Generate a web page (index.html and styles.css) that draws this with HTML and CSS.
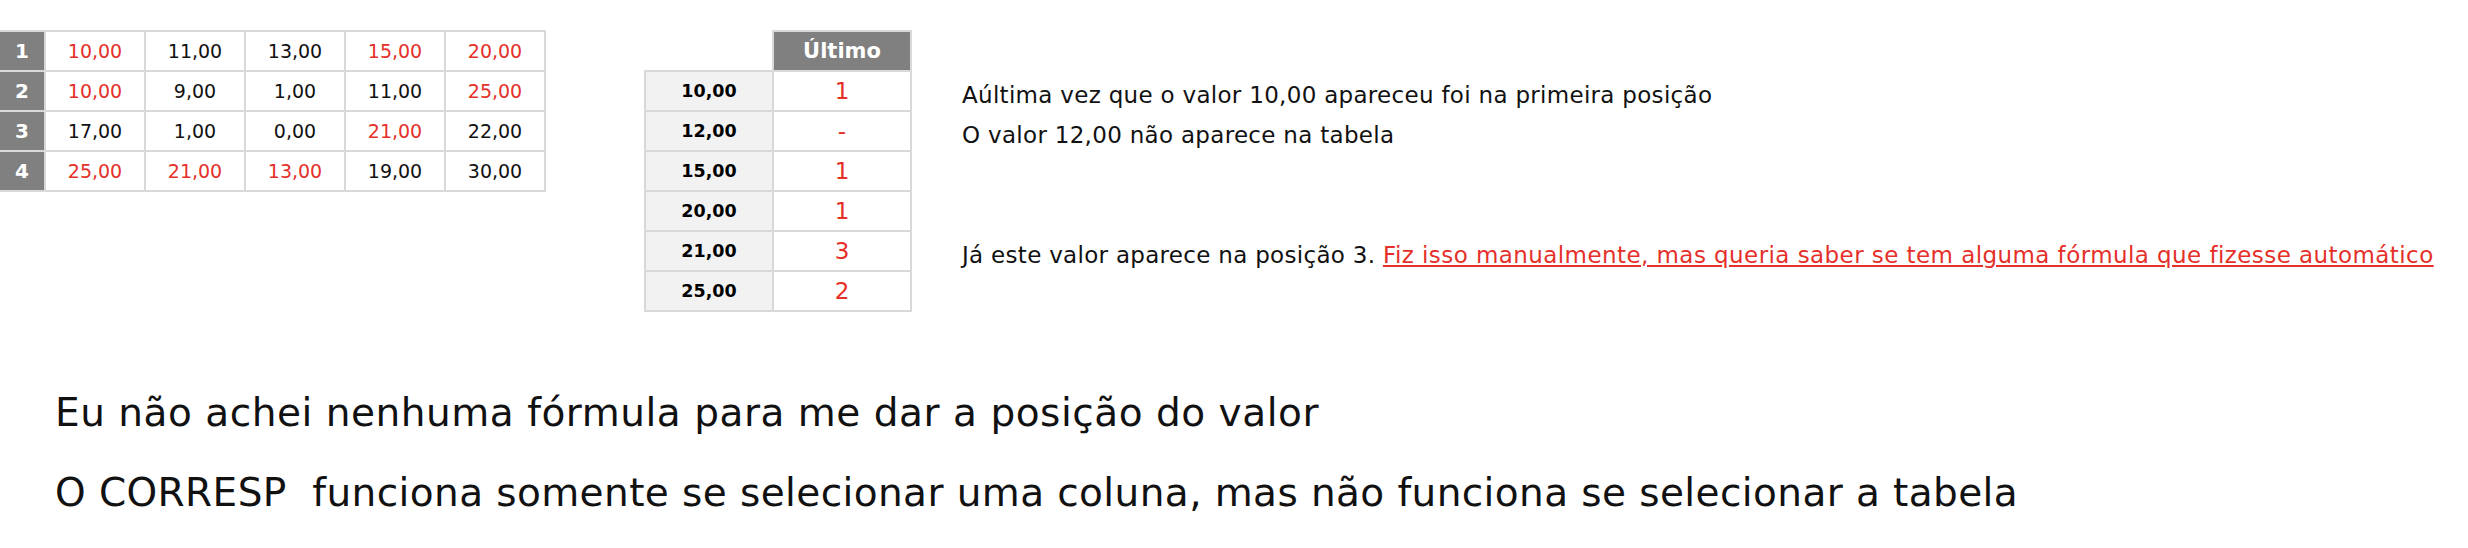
FILE: index.html
```html
<!DOCTYPE html>
<html>

<head>
	<meta charset="utf-8">
	<title>Última posição do valor</title>
	<link rel="stylesheet" href="styles.css">
</head>

<body>
	<div class="top">
		<div class="data">
			<div class="rh">1</div><div class="c red">10,00</div><div class="c">11,00</div><div class="c">13,00</div><div class="c red">15,00</div><div class="c red">20,00</div>
			<div class="rh">2</div><div class="c red">10,00</div><div class="c">9,00</div><div class="c">1,00</div><div class="c">11,00</div><div class="c red">25,00</div>
			<div class="rh">3</div><div class="c">17,00</div><div class="c">1,00</div><div class="c">0,00</div><div class="c red">21,00</div><div class="c">22,00</div>
			<div class="rh">4</div><div class="c red">25,00</div><div class="c red">21,00</div><div class="c red">13,00</div><div class="c">19,00</div><div class="c">30,00</div>
		</div>

		<div class="last">
			<div class="corner"></div><div class="head">Último</div>
			<div class="key">10,00</div><div class="val">1</div>
			<div class="key">12,00</div><div class="val">-</div>
			<div class="key">15,00</div><div class="val">1</div>
			<div class="key">20,00</div><div class="val">1</div>
			<div class="key">21,00</div><div class="val">3</div>
			<div class="key">25,00</div><div class="val">2</div>
		</div>

		<div class="notes">
			<p>Aúltima vez que o valor 10,00 apareceu foi na primeira posição</p>
			<p>O valor 12,00 não aparece na tabela</p>
			<p class="far">Já este valor aparece na posição 3. <a href="#">Fiz isso manualmente, mas queria saber se tem alguma fórmula que fizesse automático</a></p>
		</div>
	</div>

	<div class="question">
		<p class="first">Eu não achei nenhuma fórmula para me dar a posição do valor</p>
		<p>O CORRESP&nbsp; funciona somente se selecionar uma coluna, mas não funciona se selecionar a tabela</p>
	</div>
</body>

</html>
```

FILE: styles.css
```css
* {padding: 0; margin: 0;}
body {background: #fff; color: #111; font-family: "DejaVu Sans", "Liberation Sans", sans-serif;}

.top {display: flex; align-items: flex-start;}

/* tabela da esquerda: as linhas da grade sao o fundo aparecendo pelo gap */
.data {display: grid; grid-template-columns: 44px repeat(5, 98px); grid-auto-rows: 38px; gap: 2px; padding: 2px 2px 2px 0; background: #d9d9d9; margin-top: 30px;}
.data div {display: flex; align-items: center; justify-content: center; background: #fff; font-size: 19px;}
.data .rh {background: #808080; color: #fff; font-weight: bold; font-size: 20px;}
.red {color: #e5302a;}

/* tabela do ultimo */
.last {display: grid; grid-template-columns: 126px 136px; grid-auto-rows: 38px; gap: 2px; padding: 2px; background: #d9d9d9; margin: 30px 0 0 98px;}
.last div {display: flex; align-items: center; justify-content: center; background: #fff;}
.last .corner {margin: -2px 0 0 -2px;}
.last .head {background: #808080; color: #fff; font-weight: bold; font-size: 21px;}
.last .key {background: #f2f2f2; font-weight: bold; font-size: 17.5px; color: #000;}
.last .val {color: #e5302a; font-size: 23px;}

.notes {margin: 75px 0 0 50px; font-size: 23px; letter-spacing: 0.3px; line-height: 40px; white-space: nowrap;}
.notes .far {margin-top: 80px;}
.notes a {color: #e5302a; letter-spacing: 0.43px;}

.question {margin-top: 61px; padding-left: 55px; font-size: 39px; letter-spacing: 0.4px; line-height: 80px; white-space: nowrap;}
.question .first {letter-spacing: 0.53px;}
```
